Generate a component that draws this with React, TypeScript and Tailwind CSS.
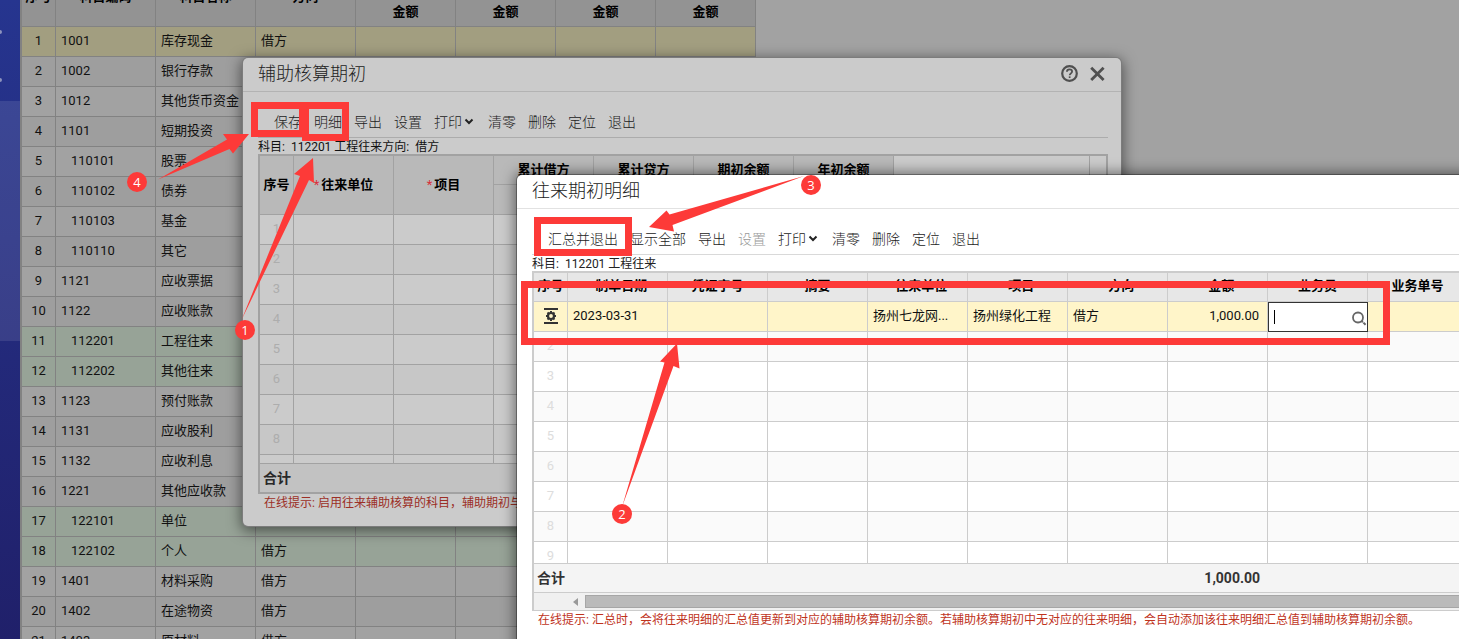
import { ReactNode } from 'react';

type Subject = { code: string; name: string; side?: string; child?: boolean };
type Column = { label: string; required?: boolean };

const subjects: Subject[] = [
  { code: '1001', name: '库存现金', side: '借方' },
  { code: '1002', name: '银行存款', side: '借方' },
  { code: '1012', name: '其他货币资金', side: '借方' },
  { code: '1101', name: '短期投资', side: '借方' },
  { code: '110101', name: '股票', side: '借方', child: true },
  { code: '110102', name: '债券', side: '借方', child: true },
  { code: '110103', name: '基金', side: '借方', child: true },
  { code: '110110', name: '其它', side: '借方', child: true },
  { code: '1121', name: '应收票据', side: '借方' },
  { code: '1122', name: '应收账款', side: '借方' },
  { code: '112201', name: '工程往来', side: '借方', child: true },
  { code: '112202', name: '其他往来', side: '借方', child: true },
  { code: '1123', name: '预付账款', side: '借方' },
  { code: '1131', name: '应收股利', side: '借方' },
  { code: '1132', name: '应收利息', side: '借方' },
  { code: '1221', name: '其他应收款', side: '借方' },
  { code: '122101', name: '单位', child: true },
  { code: '122102', name: '个人', side: '借方', child: true },
  { code: '1401', name: '材料采购', side: '借方' },
  { code: '1402', name: '在途物资', side: '借方' },
  { code: '1403', name: '原材料', side: '借方' },
];

// 带辅助核算的科目行用绿色底
const auxiliary = ['112201', '112202', '122101', '122102'];

const balanceGroups = ['累计借方', '累计贷方', '期初余额', '年初余额'];

const detailColumns: Column[] = [
  { label: '制单日期', required: true },
  { label: '凭证字号' },
  { label: '摘要' },
  { label: '往来单位', required: true },
  { label: '项目', required: true },
  { label: '方向', required: true },
  { label: '金额', required: true },
  { label: '业务员' },
  { label: '业务单号' },
];

const rowColor = (row: Subject, index: number) => {
  if (index === 0) return 'bg-[#a29e80]';
  if (auxiliary.includes(row.code)) return 'bg-[#97a397]';
  return index % 2 ? 'bg-[#9e9e9e]' : 'bg-[#a2a2a2]';
};

const Columns = ({ count }: { count: number }) => (
  <colgroup>
    <col className="w-[34px]" />
    {Array.from({ length: count }, (_, i) => (
      <col key={i} className="w-[100px]" />
    ))}
  </colgroup>
);

const Star = () => <span className="mr-0.5 font-normal text-[#d9303c]">*</span>;

const Label = ({ children }: { children: ReactNode }) => <span className="mr-[3px]">{children}</span>;

const ChevronIcon = () => (
  <svg viewBox="0 0 14 14" className="h-3.5 w-3.5" fill="none" stroke="currentColor" strokeWidth="2">
    <path d="M3.5 4.5 L7 8 L10.5 4.5" />
  </svg>
);

const RowGearIcon = () => (
  <svg viewBox="0 0 16 16" className="mx-auto h-4 w-4" fill="none" stroke="#333">
    <path d="M1 1h14M1 15h14" strokeWidth="2" />
    <circle cx="8" cy="8" r="3" strokeWidth="2.2" />
    <path
      d="M8 3v1.6M8 11.4V13M3 8h1.6M11.4 8H13M4.5 4.5l1.1 1.1M10.4 10.4l1.1 1.1M4.5 11.5l1.1-1.1M10.4 5.6l1.1-1.1"
      strokeWidth="2"
    />
  </svg>
);

const Toolbar = ({ items, disabled }: { items: string[]; disabled?: string }) => (
  <div className="flex h-[46px] items-start gap-3 border-b border-black/15 pt-5 pl-4">
    {items.map((item) => (
      <button
        key={item}
        disabled={item === disabled}
        className="flex shrink-0 items-center text-[14px] leading-5 font-light text-[#222] disabled:text-[#999]"
      >
        {item}
        {item === '打印' && <ChevronIcon />}
      </button>
    ))}
  </div>
);

const SubjectTable = () => (
  <table className="-mt-8 w-[734px] table-fixed border-separate border-spacing-0 text-[13px] leading-5 text-[#111] [&_td]:border-r [&_td]:border-b [&_td]:border-[#828282] [&_td]:pb-0.5 [&_th]:border-r [&_th]:border-b [&_th]:border-[#828282] [&_th]:bg-[#939393]">
    <Columns count={7} />
    <thead className="text-black">
      <tr className="h-[29px]">
        <th rowSpan={2}>序号</th>
        <th rowSpan={2}>科目编码</th>
        <th rowSpan={2}>科目名称</th>
        <th rowSpan={2}>方向</th>
        {balanceGroups.map((group) => (
          <th key={group}>{group}</th>
        ))}
      </tr>
      <tr className="h-[30px]">
        {balanceGroups.map((group) => (
          <th key={group}>金额</th>
        ))}
      </tr>
    </thead>
    <tbody>
      {subjects.map((row, i) => (
        <tr key={row.code} className={`h-[30px] ${rowColor(row, i)}`}>
          <td className="text-center">{i + 1}</td>
          <td className={row.child ? 'pl-[15px]' : 'pl-[5px]'}>{row.code}</td>
          <td className="pl-[5px] whitespace-nowrap">{row.name}</td>
          <td className="pl-[5px]">{row.side}</td>
          <td />
          <td />
          <td />
          <td />
        </tr>
      ))}
    </tbody>
  </table>
);

const AuxiliaryDialog = () => (
  <section className="absolute top-[58px] left-[243px] w-[878px] rounded-[5px] bg-[#cbcbcb] pb-4 shadow-[0_0_0_1px_#7c7c7c,0_3px_14px_2px_rgba(0,0,0,0.5)]">
    <header className="flex h-[34px] items-center justify-between border-b border-[#b3b3b3] px-[15px] pb-0.5">
      <h2 className="text-[18px] leading-6 font-light text-[#222]">辅助核算期初</h2>
      <div className="flex gap-[11px] text-[#505050]">
        <button aria-label="帮助">
          <svg viewBox="0 0 17 17" className="h-[17px] w-[17px]" fill="none" stroke="currentColor">
            <circle cx="8.5" cy="8.5" r="7.3" strokeWidth="2.2" />
            <path d="M5.9 6.8c0-1.6 1.1-2.5 2.6-2.5s2.6.9 2.6 2.3c0 1.7-2.4 1.8-2.4 3.7" strokeWidth="1.8" />
            <path d="M7.8 12.2h1.7" strokeWidth="1.7" />
          </svg>
        </button>
        <button aria-label="关闭">
          <svg viewBox="0 0 17 17" className="h-[17px] w-[17px]" fill="none" stroke="currentColor" strokeWidth="2.8">
            <path d="M2.2 2.7l12.4 12.4M14.6 2.7L2.2 15.1" />
          </svg>
        </button>
      </div>
    </header>
    <div className="pr-[13px] pl-[15px]">
      <Toolbar items={['保存', '明细', '导出', '设置', '打印', '清零', '删除', '定位', '退出']} />
      <p className="h-4 text-[12px] leading-[18px] text-[#111]">
        <Label>科目:</Label> 112201 工程往来<Label>方向:</Label> 借方
      </p>
      <div className="border-2 border-[#a2a2a2]">
        <div className="flex h-[307px] justify-between overflow-hidden">
          <table className="w-[634px] table-fixed border-separate border-spacing-0 self-start text-[13px] leading-5 [&_td]:border-r [&_td]:border-b [&_td]:border-[#a2a2a2] [&_td]:pb-0.5 [&_th]:border-r [&_th]:border-b [&_th]:border-[#a2a2a2] [&_th]:bg-[#b9b9b9]">
            <Columns count={6} />
            <thead className="text-black">
              <tr className="h-[29px]">
                <th rowSpan={2}>序号</th>
                <th rowSpan={2}>
                  <Star />
                  往来单位
                </th>
                <th rowSpan={2}>
                  <Star />
                  项目
                </th>
                {balanceGroups.map((group) => (
                  <th key={group}>{group}</th>
                ))}
              </tr>
              <tr className="h-[30px]">
                {balanceGroups.map((group) => (
                  <th key={group}>金额</th>
                ))}
              </tr>
            </thead>
            <tbody className="text-[#adadad]">
              {Array.from({ length: 9 }, (_, i) => (
                <tr key={i} className="h-[30px] even:bg-[#c7c7c7]">
                  <td className="text-center">{i + 1}</td>
                  <td />
                  <td />
                  <td />
                  <td />
                  <td />
                  <td />
                </tr>
              ))}
            </tbody>
          </table>
          <div className="w-[17px] border-l border-[#a2a2a2]" />
        </div>
        <div className="h-[29px] border-t border-[#a2a2a2] bg-[#c2c2c2] pl-[3px] text-[14px] leading-[29px] font-bold text-[#292929]">
          合计
        </div>
      </div>
      <p className="h-4 pl-[6px] text-[12px] leading-[18px] text-[#9c2f26]">
        <Label>在线提示:</Label>启用往来辅助核算的科目，辅助期初与
      </p>
    </div>
  </section>
);

const SalesmanInput = () => (
  <div className="relative h-[30px]">
    <input
      aria-label="业务员"
      className="h-full w-full border border-[#333] bg-white pr-5 pl-[6px] caret-transparent outline-none"
    />
    <span className="absolute top-2 left-[6px] h-3.5 w-px bg-black" />
    <svg viewBox="0 0 15 15" className="absolute right-px bottom-[6px] h-[15px] w-[15px]" fill="none" stroke="#666">
      <circle cx="6" cy="6.5" r="5" strokeWidth="1.8" />
      <path d="M9.6 10l1.2 1.2M11.4 11.6l2.2 2.2" strokeWidth="2" />
    </svg>
  </div>
);

const Cell = ({ children, right }: { children?: ReactNode; right?: boolean }) => (
  <td className={`truncate border-r pb-0.5 ${right ? 'pr-2 text-right' : 'px-[5px]'}`}>{children}</td>
);

const DetailDialog = () => (
  <section className="absolute top-[175px] left-[517px] h-[480px] w-[980px] rounded-[5px] bg-white shadow-[0_0_0_1px_rgba(0,0,0,0.3),0_0_14px_2px_rgba(0,0,0,0.5)]">
    <header className="flex h-[34px] items-center border-b border-[#e2e2e2] px-[15px] pb-0.5">
      <h2 className="text-[18px] leading-6 font-light text-[#222]">往来期初明细</h2>
    </header>
    <div className="px-[15px]">
      <Toolbar
        items={['汇总并退出', '显示全部', '导出', '设置', '打印', '清零', '删除', '定位', '退出']}
        disabled="设置"
      />
      <p className="h-4 text-[12px] leading-[18px] text-[#222]">
        <Label>科目:</Label> 112201 工程往来
      </p>
      <div className="border-t-2 border-l-2 border-[#ccc]">
        <div className="h-[290px] overflow-hidden">
          <table className="w-[934px] table-fixed border-separate border-spacing-0 text-[13px] leading-5 text-[#111] [&_td]:border-b [&_td]:border-[#ccc] [&_th]:border-r [&_th]:border-b [&_th]:border-[#ccc] [&_th]:bg-[#e7e7e7] [&_th]:pb-0.5">
            <Columns count={9} />
            <thead className="text-black">
              <tr className="h-[29px]">
                <th>序号</th>
                {detailColumns.map((column) => (
                  <th key={column.label}>
                    {column.required && <Star />}
                    {column.label}
                  </th>
                ))}
              </tr>
            </thead>
            <tbody>
              <tr className="h-[30px] bg-[#fff5c9]">
                <Cell>
                  <RowGearIcon />
                </Cell>
                <Cell>2023-03-31</Cell>
                <Cell />
                <Cell />
                <Cell>扬州七龙网...</Cell>
                <Cell>扬州绿化工程</Cell>
                <Cell>借方</Cell>
                <Cell right>1,000.00</Cell>
                <td className="border-b-0! p-0">
                  <SalesmanInput />
                </td>
                <Cell />
              </tr>
              {[2, 3, 4, 5, 6, 7, 8, 9].map((n) => (
                <tr key={n} className="h-[30px] even:bg-[#fafafa]">
                  <td className="border-r pb-0.5 text-center text-[#ddd]">{n}</td>
                  {detailColumns.map((column) => (
                    <Cell key={column.label} />
                  ))}
                </tr>
              ))}
            </tbody>
          </table>
        </div>
        <table className="w-[934px] table-fixed border-separate border-spacing-0 border-y border-[#ccc] bg-[#f4f4f4] text-[14px] leading-7 font-bold text-[#333]">
          <Columns count={9} />
          <tbody>
            <tr>
              <td colSpan={7} className="pl-[3px]">
                合计
              </td>
              <td className="pr-2 text-right">1,000.00</td>
              <td colSpan={2} />
            </tr>
          </tbody>
        </table>
        <div className="flex h-[18px] items-center border-b border-[#ccc] bg-[#f0f0f0] pl-[39px]">
          <svg viewBox="0 0 6 8" className="mr-[6px] h-2 w-1.5" fill="#999">
            <path d="M5 0v8L0 4z" />
          </svg>
          <div className="h-[13px] flex-1 border border-[#a6a6a6] bg-[#bababa]" />
        </div>
      </div>
      <p className="h-4 pl-[6px] text-[12px] leading-[18px] whitespace-nowrap text-[#c0341d]">
        <Label>在线提示:</Label>
        汇总时，会将往来明细的汇总值更新到对应的辅助核算期初余额。若辅助核算期初中无对应的往来明细，会自动添加该往来明细汇总值到辅助核算期初余额。
      </p>
    </div>
  </section>
);

const Badge = ({ n, place }: { n: number; place: string }) => (
  <span
    className={`absolute flex h-5 w-5 items-center justify-center rounded-full bg-[#fd3a38] font-['Open_Sans'] text-[13px] leading-5 text-white ${place}`}
  >
    {n}
  </span>
);

// 操作步骤标注：红框、箭头和序号
const Steps = () => (
  <div className="pointer-events-none absolute inset-0">
    <div className="absolute top-[102px] left-[251px] h-[35px] w-[55px] border-7 border-[#fd3a38]" />
    <div className="absolute top-[102px] left-[302px] h-[39px] w-[47px] border-7 border-[#fd3a38]" />
    <div className="absolute top-[217px] left-[534px] h-[39px] w-[98px] border-7 border-[#fd3a38]" />
    <div className="absolute top-[281px] left-[521px] h-[64px] w-[869px] border-7 border-[#fd3a38]" />
    <svg className="absolute top-0 left-0 h-[639px] w-[1459px]" fill="#fd3a38">
      <path d="M158 179.5 L227 139.5 L223 134 L249 134 L233 153.5 L229.5 149 Z" />
      <path d="M241.5 320 L300 176 L294 174 L313 158 L314 183 L309 180 Z" />
      <path d="M622 507 L664.5 362.5 L660 361.5 L677 343.5 L679.5 368.5 L673.5 366 Z" />
      <path d="M804 176 L669.5 214.5 L666.5 210.5 L649 227 L674 231.5 L672.5 225 Z" />
    </svg>
    <Badge n={1} place="top-[320px] left-[235px]" />
    <Badge n={2} place="top-[504px] left-[612px]" />
    <Badge n={3} place="top-[175px] left-[801px]" />
    <Badge n={4} place="top-[172px] left-[127px]" />
  </div>
);

const App = () => {
  return (
    <div className="relative flex h-screen overflow-hidden bg-[#a2a2a2] font-[Roboto,'Noto_Sans_CJK_SC',sans-serif]">
      <nav className="flex w-5 shrink-0 flex-col bg-linear-to-b from-[#26358f] to-[#20206a]">
        <div className="flex h-[101px] flex-col gap-11 pt-[30px]">
          <span className="h-1 w-0.5 rounded-r-full bg-[#8d93bd]" />
          <span className="h-1 w-0.5 rounded-r-full bg-[#8d93bd]" />
        </div>
        <div className="h-60 bg-white/10" />
      </nav>
      <main className="border-l-2 border-[#828282]">
        <SubjectTable />
      </main>
      <AuxiliaryDialog />
      <DetailDialog />
      <Steps />
    </div>
  );
};

export default App;
